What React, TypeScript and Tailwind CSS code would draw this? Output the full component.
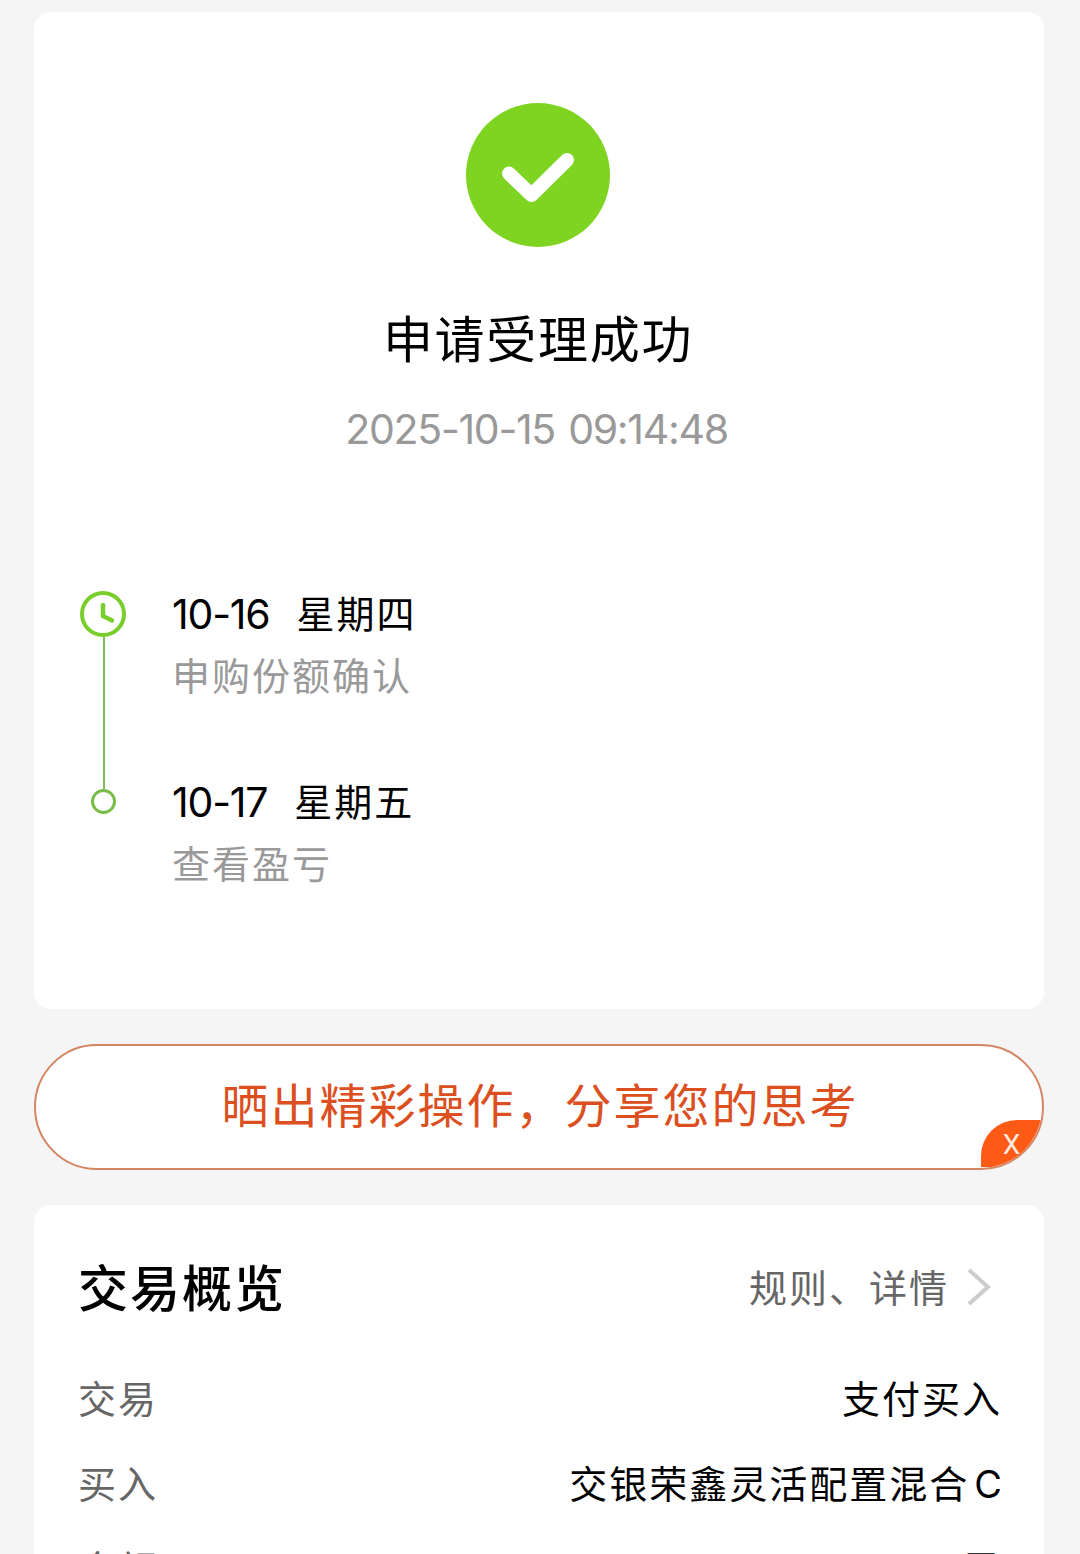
import React from "react";

interface Step {
  date: string;
  weekday: string;
  note: string;
}

interface RowProps {
  label: string;
  children: React.ReactNode;
}

const steps: Step[] = [
  { date: "10-16", weekday: "星期四", note: "申购份额确认" },
  { date: "10-17", weekday: "星期五", note: "查看盈亏" },
];

const SuccessIcon = () => (
  <svg className="size-36" fill="none" viewBox="0 0 144 144">
    <circle cx="72" cy="72" fill="#7ed421" r="72" />
    <path
      d="M43 70.500L65.500 92L101 57"
      stroke="#fff"
      strokeLinecap="round"
      strokeLinejoin="round"
      strokeWidth="14"
    />
  </svg>
);

const ClockIcon = () => (
  <svg className="size-[46px]" fill="none" viewBox="0 0 46 46">
    <circle cx="23" cy="23" r="21" stroke="#7ace2c" strokeWidth="4" />
    <path
      d="M23 14V25L32 29.500"
      stroke="#7ace2c"
      strokeLinecap="round"
      strokeLinejoin="round"
      strokeWidth="4.500"
    />
  </svg>
);

const SummaryRow: React.FC<RowProps> = ({ label, children }) => (
  <div className="flex h-[85px] items-center justify-between text-[38px] tracking-[2px]">
    <span className="text-[#666]">{label}</span>
    <span className="-mr-0.5 text-black">{children}</span>
  </div>
);

const App: React.FC = () => {
  return (
    <main className="flex h-[1554px] w-[1080px] flex-col overflow-hidden bg-[#f5f5f5] pt-3 pr-9 pl-[34px] font-['Noto_Sans_CJK_SC',sans-serif] whitespace-nowrap">
      {/* Result */}
      <section className="h-[997px] shrink-0 rounded-[17px] bg-white pt-[91px]">
        <div className="flex flex-col items-center pr-0.5">
          <SuccessIcon />
          <h1 className="mt-[53px] text-[50px] leading-[72px] tracking-[1.7px] text-black">
            申请受理成功
          </h1>
          <p className="mt-[27px] mr-[3px] font-['Inter',sans-serif] text-[41px] leading-[60px] tracking-[-1.3px] text-[#999] [word-spacing:3px]">
            2025-10-15 09:14:48
          </p>
        </div>

        {/* Timeline */}
        <div className="mt-[132px] flex pl-[46px]">
          <div className="flex w-[46px] flex-col items-center">
            <ClockIcon />
            <div className="ml-0.5 h-[152px] w-0.5 bg-[#82bd5c]" />
            <div className="ml-px size-[25px] rounded-full border-[3px] border-[#79bd48]" />
          </div>
          <div className="ml-[46px] flex flex-col">
            {steps.map((step) => (
              <div key={step.date} className="h-[188px]">
                <div className="flex h-[46px] items-center">
                  <span className="mt-0.5 font-['Inter',sans-serif] text-[41px] tracking-[-1.2px] text-black">
                    {step.date}
                  </span>
                  <span className="-mt-1.5 ml-[27px] text-[38px] tracking-[2px] text-black">
                    {step.weekday}
                  </span>
                </div>
                <p className="mt-[9px] text-[38px] leading-[56px] tracking-[2px] text-[#999]">
                  {step.note}
                </p>
              </div>
            ))}
          </div>
        </div>
      </section>

      {/* Share */}
      <div className="relative mt-[35px] flex h-[126px] shrink-0 items-center justify-center overflow-hidden rounded-full border-2 border-[#d38663] bg-white">
        <span className="mb-[7px] ml-0.5 text-[47px] tracking-[2px] text-[#dc4f20]">
          晒出精彩操作，分享您的思考
        </span>
        <button className="absolute right-0 bottom-px flex h-[47px] w-[61px] items-center justify-center rounded-tl-[36px] bg-[#fc5a15] pt-0.5 font-['Roboto',sans-serif] text-[28px] text-[#ffeadf]">
          X
        </button>
      </div>

      {/* Overview */}
      <section className="mt-[35px] h-[460px] shrink-0 rounded-t-[17px] bg-white px-11">
        <div className="flex h-[149px] items-center justify-between pt-[11px]">
          <h2 className="text-[50px] font-medium tracking-[2px] text-black">
            交易概览
          </h2>
          <div className="flex items-center pr-[9px] text-[38px] tracking-[2px] text-[#666]">
            规则、详情
            <svg className="mt-1 ml-[18px] h-[38px] w-6" fill="none" viewBox="0 0 24 38">
              <path d="M2 2L21 19L2 36" stroke="#ccc" strokeWidth="4" />
            </svg>
          </div>
        </div>
        <SummaryRow label="交易">支付买入</SummaryRow>
        <SummaryRow label="买入">
          交银荣鑫灵活配置混合
          <span className="ml-[5px] font-['Inter',sans-serif] leading-none tracking-normal">
            C
          </span>
        </SummaryRow>
        <SummaryRow label="金额">
          <span className="flex items-center gap-4 pb-0.5">
            <span className="text-[#fc5a15]">10.00</span>
            <span>元</span>
          </span>
        </SummaryRow>
      </section>
    </main>
  );
};

export default App;
